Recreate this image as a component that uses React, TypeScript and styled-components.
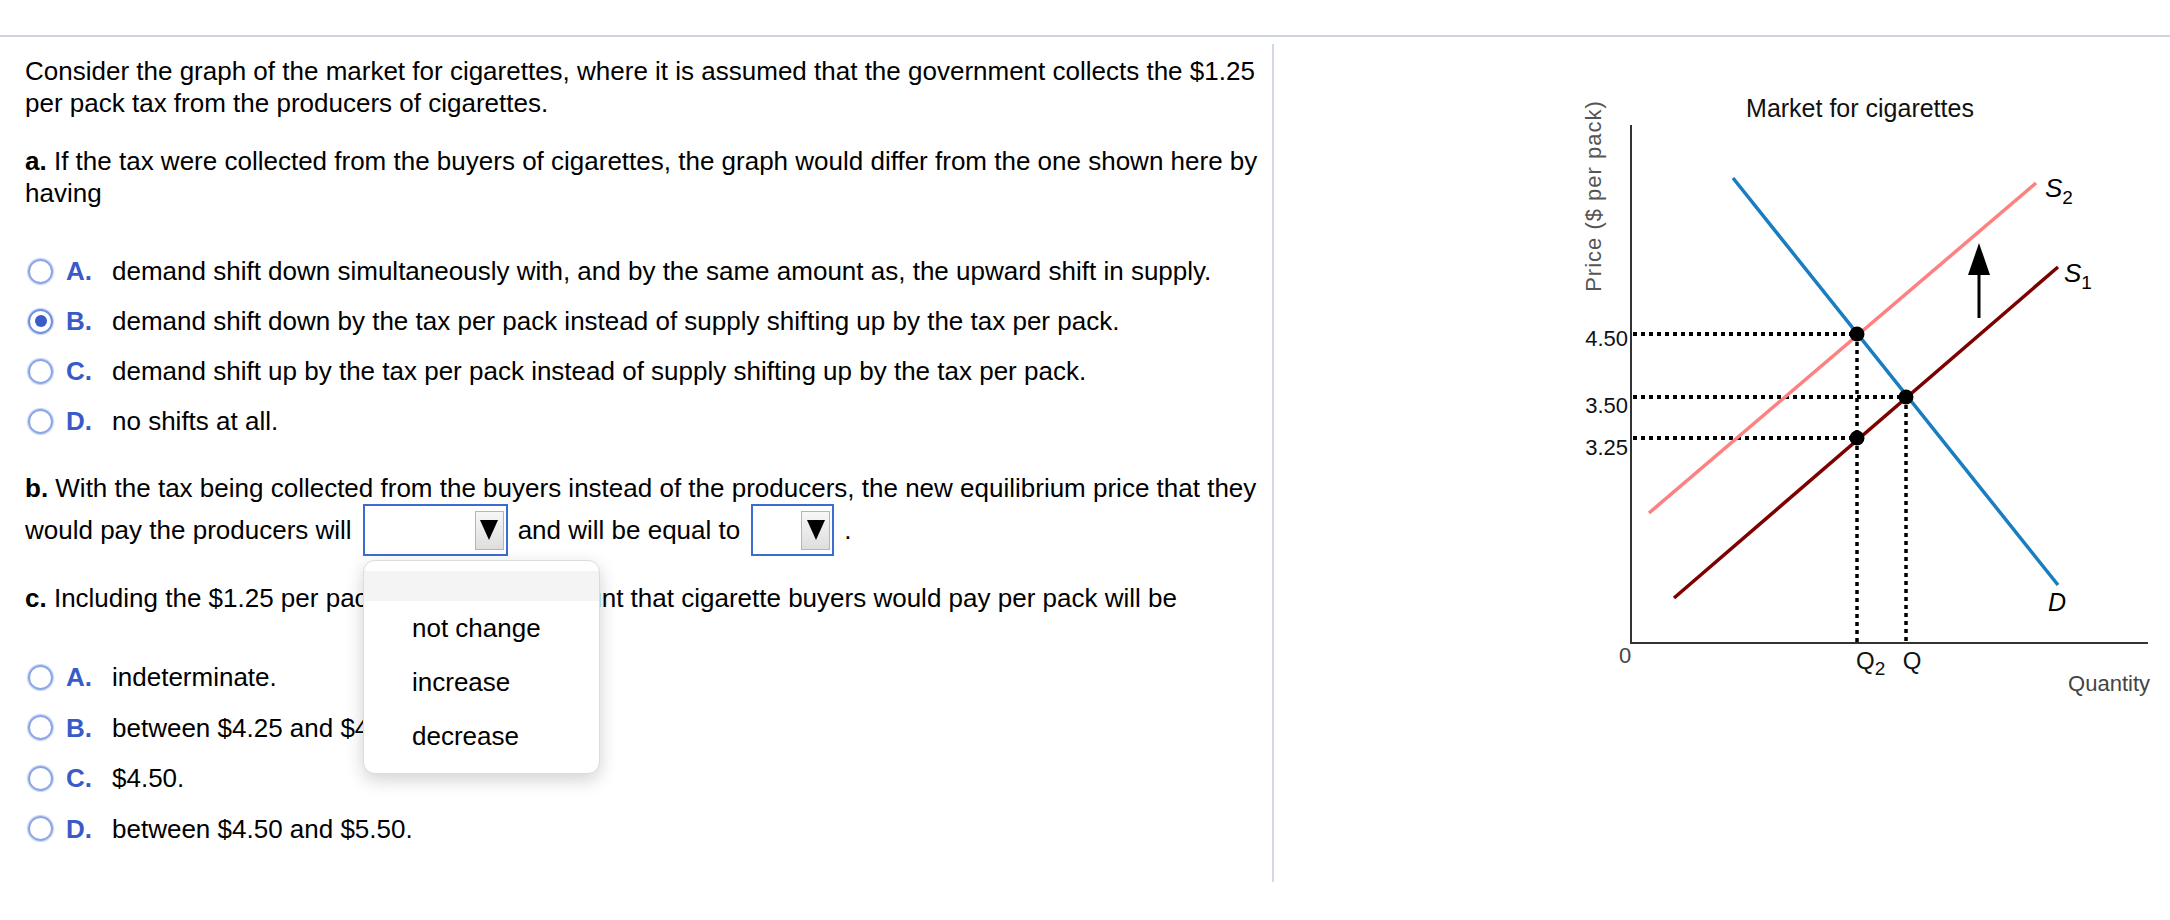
import React from 'react';
import styled, { createGlobalStyle } from 'styled-components';

const GlobalStyle = createGlobalStyle`
  html, body {
    margin: 0;
    padding: 0;
    background: #ffffff;
  }
  body {
    font-family: 'Liberation Sans', Arial, Helvetica, sans-serif;
    color: #000000;
  }
`;

const Page = styled.div`
  width: 2170px;
  height: 920px;
  overflow: hidden;
  display: flex;
  flex-direction: column;
`;

const TopRule = styled.div`
  height: 35px;
  flex-shrink: 0;
  border-bottom: 2px solid #ced4de;
`;

const Main = styled.div`
  display: flex;
  padding-top: 7px;
`;

const Question = styled.div`
  width: 1247px;
  padding: 11px 0 0 25px;
  font-size: 26px;
  line-height: 32px;
`;

const Paragraph = styled.p<{ $gap?: number }>`
  margin: ${(p) => p.$gap ?? 0}px 0 0 0;
`;

const Bold = styled.b`
  font-weight: 700;
`;

const Options = styled.div<{ $gap: number }>`
  margin-top: ${(p) => p.$gap}px;
  display: flex;
  flex-direction: column;
`;

const OptionRow = styled.div<{ $h: number }>`
  height: ${(p) => p.$h}px;
  display: flex;
  align-items: center;
`;

const Radio = styled.span<{ $checked?: boolean }>`
  width: 21px;
  height: 21px;
  margin-left: 3px;
  border-radius: 50%;
  border: 2px solid ${(p) => (p.$checked ? '#6f8fe0' : '#8aa5e6')};
  box-shadow: 0 0 1px 1px rgba(120, 150, 225, 0.45);
  display: flex;
  align-items: center;
  justify-content: center;
  flex-shrink: 0;

  &::after {
    content: '';
    display: ${(p) => (p.$checked ? 'block' : 'none')};
    width: 12px;
    height: 12px;
    border-radius: 50%;
    background: #3a5cc9;
  }
`;

const Letter = styled.span`
  width: 46px;
  margin-left: 13px;
  color: #3a5bc7;
  font-weight: 700;
`;

const Line = styled.div`
  display: flex;
  align-items: center;
  height: 52px;
  white-space: pre;
`;

const Select = styled.span<{ $width: number }>`
  width: ${(p) => p.$width}px;
  height: 48px;
  box-sizing: content-box;
  border: 2px solid #3c6cd0;
  margin: 0 10px 0 11px;
  display: flex;
  justify-content: flex-end;
  align-items: center;
  padding-right: 2px;
  flex-shrink: 0;
`;

const SelectButton = styled.span`
  width: 27px;
  height: 37px;
  border: 1px solid #b5b5b5;
  background: linear-gradient(#f7f7f7, #dedede);
  display: flex;
  align-items: center;
  justify-content: center;

  &::after {
    content: '';
    border-left: 9px solid transparent;
    border-right: 9px solid transparent;
    border-top: 20px solid #000;
  }
`;

const PartC = styled.div`
  position: relative;
`;

const Popup = styled.div`
  position: absolute;
  left: 338px;
  top: -22px;
  width: 237px;
  height: 214px;
  background: #ffffff;
  border: 1px solid #dcdcdc;
  border-radius: 12px;
  box-shadow: 0 6px 18px rgba(0, 0, 0, 0.18);
  padding-top: 10px;
  box-sizing: border-box;
  z-index: 2;
`;

const PopupBlank = styled.div`
  height: 30px;
  background: #f4f4f4;
`;

const PopupItem = styled.div`
  height: 54px;
  display: flex;
  align-items: center;
  padding-left: 48px;
  font-size: 26px;
`;

const ChartPanel = styled.div`
  border-left: 2px solid #d3d9e3;
  height: 838px;
  flex: 1;
`;

const ChartSvg = styled.svg`
  display: block;
  font-family: 'Liberation Sans', Arial, sans-serif;
`;

const partA = [
  { letter: 'A.', text: 'demand shift down simultaneously with, and by the same amount as, the upward shift in supply.' },
  { letter: 'B.', text: 'demand shift down by the tax per pack instead of supply shifting up by the tax per pack.', checked: true },
  { letter: 'C.', text: 'demand shift up by the tax per pack instead of supply shifting up by the tax per pack.' },
  { letter: 'D.', text: 'no shifts at all.' },
];

const partC = [
  { letter: 'A.', text: 'indeterminate.' },
  { letter: 'B.', text: 'between $4.25 and $4.50.' },
  { letter: 'C.', text: '$4.50.' },
  { letter: 'D.', text: 'between $4.50 and $5.50.' },
];

const Chart: React.FC = () => (
  <ChartSvg width="896" height="838" viewBox="1274 44 896 838">
    <text x="1860" y="117" fontSize="25" textAnchor="middle" fill="#111">
      Market for cigarettes
    </text>
    <text
      x="1593"
      y="196"
      fontSize="22"
      letterSpacing="1"
      textAnchor="middle"
      dominantBaseline="central"
      fill="#555"
      transform="rotate(-90 1593 196)"
    >
      Price ($ per pack)
    </text>

    {/* guides */}
    <g stroke="#000" strokeWidth="4" strokeDasharray="4 4">
      <line x1="1633" y1="334" x2="1857" y2="334" />
      <line x1="1633" y1="397" x2="1906" y2="397" />
      <line x1="1633" y1="438" x2="1857" y2="438" />
    </g>
    <g stroke="#000" strokeWidth="3.5" strokeDasharray="4 4">
      <line x1="1857" y1="334" x2="1857" y2="642" />
      <line x1="1906" y1="397" x2="1906" y2="642" />
    </g>

    {/* axes */}
    <g stroke="#333" strokeWidth="2">
      <line x1="1631" y1="125" x2="1631" y2="644" />
      <line x1="1630" y1="643" x2="2148" y2="643" />
    </g>

    {/* curves */}
    <line x1="1649" y1="513" x2="2036" y2="183" stroke="#fd8181" strokeWidth="3.5" />
    <line x1="1674" y1="598" x2="2058" y2="267" stroke="#7d0000" strokeWidth="3.5" />
    <line x1="1733" y1="178" x2="2058" y2="585" stroke="#1a7dbf" strokeWidth="3.5" />

    {/* shift arrow */}
    <line x1="1979" y1="318" x2="1979" y2="270" stroke="#000" strokeWidth="3" />
    <polygon points="1979,243 1968,275 1990,275" fill="#000" />

    <g fill="#000">
      <circle cx="1857" cy="334" r="7.5" />
      <circle cx="1906" cy="397" r="7.5" />
      <circle cx="1857" cy="438" r="7.5" />
    </g>

    <g fontSize="22" fill="#111" textAnchor="end" dominantBaseline="central">
      <text x="1628" y="338">4.50</text>
      <text x="1628" y="405">3.50</text>
      <text x="1628" y="447">3.25</text>
    </g>

    <text x="1625" y="655" fontSize="22" fill="#444" textAnchor="middle" dominantBaseline="central">
      0
    </text>
    <text x="1856" y="669" fontSize="24" fill="#111">
      Q<tspan fontSize="19" dy="6">2</tspan>
    </text>
    <text x="1912" y="669" fontSize="24" fill="#111" textAnchor="middle">
      Q
    </text>
    <text x="2150" y="691" fontSize="22" fill="#444" textAnchor="end">
      Quantity
    </text>

    <text x="2045" y="197" fontSize="26" fontStyle="italic" fill="#000">
      S<tspan fontSize="19" fontStyle="normal" dy="7">2</tspan>
    </text>
    <text x="2064" y="282" fontSize="26" fontStyle="italic" fill="#000">
      S<tspan fontSize="19" fontStyle="normal" dy="7">1</tspan>
    </text>
    <text x="2048" y="611" fontSize="25" fontStyle="italic" fill="#000">
      D
    </text>
  </ChartSvg>
);

const App: React.FC = () => (
  <>
    <GlobalStyle />
    <Page>
      <TopRule />
      <Main>
        <Question>
          <Paragraph>
            Consider the graph of the market for cigarettes, where it is assumed that the government collects the $1.25
            <br />
            per pack tax from the producers of cigarettes.
          </Paragraph>
          <Paragraph $gap={26}>
            <Bold>a.</Bold> If the tax were collected from the buyers of cigarettes, the graph would differ from the one shown here by
            <br />
            having
          </Paragraph>

          <Options $gap={37}>
            {partA.map((o) => (
              <OptionRow key={o.letter} $h={50}>
                <Radio $checked={o.checked} />
                <Letter>{o.letter}</Letter>
                <span>{o.text}</span>
              </OptionRow>
            ))}
          </Options>

          <Paragraph $gap={26}>
            <Bold>b.</Bold> With the tax being collected from the buyers instead of the producers, the new equilibrium price that they
          </Paragraph>
          <Line>
            would pay the producers will
            <Select $width={139}>
              <SelectButton />
            </Select>
            and will be equal to
            <Select $width={77}>
              <SelectButton />
            </Select>
            .
          </Line>

          <PartC>
            <Paragraph $gap={26}>
              <Bold>c.</Bold> Including the $1.25 per pack tax, the total amount that cigarette buyers would pay per pack will be
            </Paragraph>
            <Popup>
              <PopupBlank />
              <PopupItem>not change</PopupItem>
              <PopupItem>increase</PopupItem>
              <PopupItem>decrease</PopupItem>
            </Popup>
          </PartC>

          <Options $gap={38}>
            {partC.map((o) => (
              <OptionRow key={o.letter} $h={50.5}>
                <Radio />
                <Letter>{o.letter}</Letter>
                <span>{o.text}</span>
              </OptionRow>
            ))}
          </Options>
        </Question>
        <ChartPanel>
          <Chart />
        </ChartPanel>
      </Main>
    </Page>
  </>
);

export default App;
